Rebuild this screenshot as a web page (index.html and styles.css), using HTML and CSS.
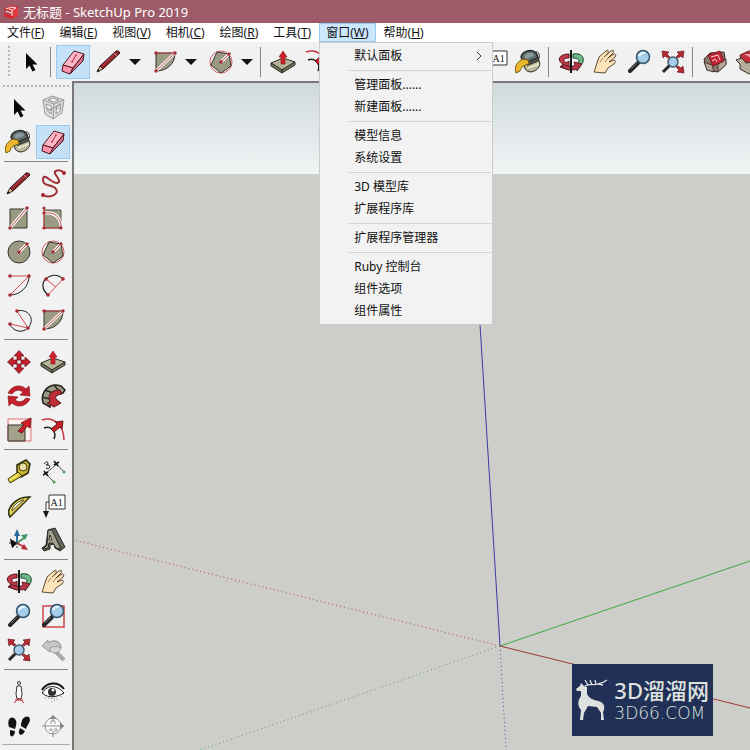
FILE: index.html
```html
<!DOCTYPE html>
<html lang="zh-CN">
<head>
<meta charset="utf-8">
<title>无标题 - SketchUp Pro 2019</title>
<link rel="stylesheet" href="styles.css">
</head>
<body>
<svg class="sprite" aria-hidden="true">
  <symbol id="select" viewBox="0 0 34 34"><path d="M12 8V24L15.5 20.5L18.5 26.5L21.5 25L18.5 19.5H23.5Z" fill="#080808"/></symbol>
  <symbol id="component" viewBox="0 0 34 34"><g fill="#dedede" stroke="#989898" stroke-linejoin="round"><path d="M7 9L16 5L28 9L26 22L17 28L9 23Z"/><path d="M7 9L18 13L28 9M18 13L17 28"/><path d="M10 13L15.500 15L15 23L11.500 20ZM20.500 15L25 12.500L24 20L20 23ZM12 9L17 7L23 9L18 11Z" fill="#f4f4f4"/><path d="M11 17L15 19M21 18L25 16M12 20L24 14" /></g></symbol>
  <symbol id="paint" viewBox="0 0 34 34"><path d="M11 11C14 5 22 5 25 9L28 19C27 26 17 30 13 24Z" fill="#b8b69b" stroke="#303129"/><path d="M9 12C10 6 20 3 24 8L26 13L12 19Z" fill="#5d6a68" stroke="#26292a" stroke-width="1.500"/><path d="M12 11C14 8 18 7 21 8L22 11L14 14Z" fill="#8a9b9d"/><path d="M15 20L27 15" stroke="#3e413a" stroke-width="2"/><path d="M16 23L27 19" stroke="#e4e1c8" stroke-width="2"/><path d="M22 8C27 4 29 12 26 15" fill="none" stroke="#333"/><path d="M11 14C5 17 2 21 4 28L8 26C9 22 12 20 17 19L16 15Z" fill="#edb72c" stroke="#785b16"/></symbol>
  <symbol id="eraser" viewBox="0 0 34 34"><g stroke="#4d1722" stroke-linejoin="round"><path d="M18 6L28 9L17 23L7 20Z" fill="#ffb5c4"/><path d="M7 20L17 23L14 29L6 26Z" fill="#ff94aa"/><path d="M28 9L27 16L14 29L17 23Z" fill="#d66f88"/></g><path d="M20 10L16 17M19 10H21M15 17H17" stroke="#a72d4a"/></symbol>
  <symbol id="pencil" viewBox="0 0 34 34"><path d="M8 21L24 6Q27 5 28 8L11 24Z" fill="#8f2228" stroke="#37181a"/><path d="M10 21L24 8" stroke="#c04a50"/><path d="M5 27L8 21L11 24Z" fill="#dec29b" stroke="#37281f"/><path d="M5 27L6 24L8 26Z" fill="#111"/><path d="M22 8L25 11" stroke="#bb9294"/></symbol>
  <symbol id="freehand" viewBox="0 0 34 34"><path d="M7 28C13 32 24 27 20 22C17 17 7 20 7 13C7 4 16 17 21 16C28 14 15 6 20 4Q24 2 28 6" fill="none" stroke="#9e3036" stroke-width="2"/><circle cx="7" cy="28" r="2" fill="#a82932"/><circle cx="28" cy="6" r="2" fill="#a82932"/></symbol>
  <symbol id="rect" viewBox="0 0 34 34"><path d="M8 8H25V27H8Z" fill="#9b9b83" stroke="#34342e"/><path d="M8 27L25 7" stroke="#fff" stroke-width="3"/><path d="M8 27L25 7" stroke="#bd3c43"/><circle cx="8" cy="27" r="1.700" fill="#a42b32"/><circle cx="25" cy="7" r="1.700" fill="#a42b32"/></symbol>
  <symbol id="rotrect" viewBox="0 0 34 34"><path d="M8 9H25V27H8Z" fill="#9b9b83" stroke="#54544b"/><path d="M8 12C19 11 24 16 25 25" fill="none" stroke="#fff" stroke-width="3"/><path d="M8 7V27H25V24C24 16 19 11 8 12" fill="none" stroke="#c6464c"/><g fill="#a42b32"><circle cx="8" cy="7" r="1.600"/><circle cx="8" cy="12" r="1.600"/><circle cx="8" cy="27" r="1.600"/><circle cx="25" cy="27" r="1.600"/></g></symbol>
  <symbol id="circle" viewBox="0 0 34 34"><circle cx="17" cy="17" r="11" fill="#9b9b83" stroke="#34342e"/><path d="M17 17L25 9" stroke="#fff" stroke-width="3"/><path d="M17 17L25 9" stroke="#bd3c43"/><circle cx="17" cy="17" r="1.700" fill="#a42b32"/><circle cx="25" cy="9" r="1.700" fill="#a42b32"/></symbol>
  <symbol id="polygon" viewBox="0 0 34 34"><circle cx="17" cy="17" r="11" fill="none" stroke="#ce5b60"/><path d="M13 7L25 9L27 21L17 28L7 20Z" fill="#9b9b83" stroke="#34342e"/><path d="M17 17L25 9" stroke="#fff" stroke-width="3"/><path d="M17 17L25 9" stroke="#bd3c43"/><circle cx="17" cy="17" r="1.700" fill="#a42b32"/><circle cx="25" cy="9" r="1.700" fill="#a42b32"/></symbol>
  <symbol id="arc" viewBox="0 0 34 34"><path d="M27 7C27 18 18 26 8 26" fill="none" stroke="#222"/><path d="M8 7H27L8 26" fill="none" stroke="#d04b51"/><g fill="#a42b32"><circle cx="8" cy="7" r="1.800"/><circle cx="27" cy="7" r="1.800"/><circle cx="8" cy="26" r="1.800"/></g></symbol>
  <symbol id="arc2" viewBox="0 0 34 34"><path d="M12 26C5 20 6 13 10 10C15 5 22 5 27 10" fill="none" stroke="#222" stroke-width="1.200"/><path d="M10 10L20 18M27 10L12 26" stroke="#d04b51"/><g fill="#a42b32"><circle cx="10" cy="10" r="1.800"/><circle cx="27" cy="10" r="1.800"/><circle cx="12" cy="26" r="1.800"/></g></symbol>
  <symbol id="arc3" viewBox="0 0 34 34"><path d="M15 8C26 5 34 16 26 25C20 31 10 28 8 21" fill="none" stroke="#222"/><path d="M15 8L26 25L8 21" fill="none" stroke="#d04b51"/><g fill="#a42b32"><circle cx="15" cy="8" r="1.800"/><circle cx="8" cy="21" r="1.800"/><circle cx="26" cy="25" r="1.800"/></g></symbol>
  <symbol id="pie" viewBox="0 0 34 34"><path d="M8 8H27C27 19 19 26 8 26Z" fill="#9b9b83" stroke="#34342e"/><path d="M8 26L27 8" stroke="#fff" stroke-width="3"/><path d="M8 8H27L8 26" fill="none" stroke="#c4444b"/><g fill="#a42b32"><circle cx="8" cy="8" r="1.700"/><circle cx="27" cy="8" r="1.700"/><circle cx="8" cy="26" r="1.700"/></g></symbol>
  <symbol id="move" viewBox="0 0 34 34"><path id="arm" d="M17 5.500L22 11H19V15H15V11H12Z" fill="#c3202c" stroke="#651219" stroke-width=".7"/><use href="#arm" transform="rotate(90 17 17)"/><use href="#arm" transform="rotate(180 17 17)"/><use href="#arm" transform="rotate(270 17 17)"/></symbol>
  <symbol id="push" viewBox="0 0 34 34"><g stroke="#2e2e25" stroke-linejoin="round"><path d="M5 18L17 13L29 17L16 25Z" fill="#b4b299"/><path d="M5 18V21L16 28V25ZM16 25L29 17V20L16 28Z" fill="#777860"/></g><path d="M17 6L21 12H19V19H15V12H13Z" fill="#cf202b" stroke="#9c1c24" stroke-width=".7"/></symbol>
  <symbol id="rotate" viewBox="0 0 34 34"><g fill="#c3202c" stroke="#8e151c" stroke-width=".7"><path id="turn" d="M6 14C10 6 19 5 24 10L27 7L28 17L18 16L21 13C17 10 13 11 10 15Z"/><use href="#turn" transform="rotate(180 17 17)"/></g></symbol>
  <symbol id="follow" viewBox="0 0 34 34"><path d="M25 7C13 3 4 13 7 24L14 28C13 20 19 14 27 14L29 11Z" fill="#9c9b87" stroke="#20201d" stroke-width="1.500"/><path d="M6 18L14 20M9 11L17 14M18 6L23 12" stroke="#292924" stroke-width="1.500"/><path d="M24 11C15 11 11 16 14 23L11 24L18 28L25 24L21 21C18 18 20 16 26 15Z" fill="#bd2d36" stroke="#58181a"/></symbol>
  <symbol id="scale" viewBox="0 0 34 34"><path d="M6 6H29V28H6Z" fill="#fbf1ef" stroke="#dd7077"/><path d="M6 12H23V28H6Z" fill="#a3a18a" stroke="#34332d"/><path d="M16 18L22 12L19 10L29 5L28 15L25 13L20 20Z" fill="#d11e29" stroke="#741a1e"/></symbol>
  <symbol id="offset" viewBox="0 0 34 34"><path d="M6 7C18 3 28 13 28 27" fill="none" stroke="#c8343e" stroke-width="1.500"/><path d="M8 15C15 12 21 19 18 26" fill="none" stroke="#27221f" stroke-width="1.500"/><path d="M15 16L21 11L19 9L27 8L26 16L24 14L18 19Z" fill="#c91f29" stroke="#621719"/></symbol>
  <symbol id="tape" viewBox="0 0 34 34"><path d="M15 10L24 5L28 9L26 18L19 22L15 18Z" fill="#c9b52f" stroke="#29270e" stroke-width="1.500"/><circle cx="21" cy="12" r="4" fill="#e8dfa0" stroke="#48441a"/><path d="M16 17L6 24L8 28L20 21Z" fill="#e0cb39" stroke="#403b0d"/><path d="M7 25L16 20" stroke="#fff79a"/></symbol>
  <symbol id="dimension" viewBox="0 0 34 34"><path d="M9 19L21 9M8 17L18 27M18 6L28 17" stroke="#50574f"/><path d="M7 20L12 17M18 10L23 7M8 16L12 21M18 6L22 11" stroke="#111" stroke-width="1.500"/><circle cx="18" cy="27" r="1.500" fill="#45a359"/><circle cx="28" cy="17" r="1.500" fill="#45a359"/><path d="M8 9Q11 5 12 8Q12 10 10 10Q14 9 14 12Q13 15 10 13" fill="none" stroke="#222"/></symbol>
  <symbol id="protractor" viewBox="0 0 34 34"><path d="M8 28C3 20 14 7 28 8Z" fill="#e2d358" stroke="#2f2d12" stroke-width="1.500"/><path d="M10 22C10 17 16 12 22 11Z" fill="#f0f0e8" stroke="#565023"/><path d="M8 28L28 8" stroke="#4b4617"/></symbol>
  <symbol id="label" viewBox="0 0 34 34"><path d="M13 6H29V20H13ZM13 13H10V23" fill="#fff" stroke="#333"/><path d="M7 22H13L10 29Z" fill="#161616"/><text x="14.500" y="17" font-size="10" font-family="Liberation Serif" fill="#111">A1</text></symbol>
  <symbol id="axes" viewBox="0 0 34 34"><path d="M15 20V10" stroke="#3070a0" stroke-width="2"/><path d="M12 13L15 6L18 13Z" fill="#286998"/><path d="M15 20L22 15" stroke="#4c9269" stroke-width="2"/><path d="M19 12L26 11L23 17Z" fill="#439765"/><path d="M15 20L22 24" stroke="#be3c42" stroke-width="2"/><path d="M22 21L26 27L19 26Z" fill="#b62c34"/><path d="M8 16L15 20L10 25M15 20V26M7 20H14" stroke="#333" stroke-dasharray="2 1"/></symbol>
  <symbol id="text3d" viewBox="0 0 34 34"><path d="M12 7L19 5L29 24L24 28L19 25L18 21L14 22L14 26L8 28L6 25L10 22Z" fill="#65645a" stroke="#272722" stroke-linejoin="round"/><path d="M12 7L16 7L25 26L20 25L17 20H13L12 25L7 26L11 22Z" fill="#a2a18e" stroke="#292924"/><path d="M14 12L16 17H13Z" fill="#eee" stroke="#34342d"/></symbol>
  <symbol id="orbit" viewBox="0 0 34 34"><path d="M19 9C32 7 32 19 23 23V19C27 16 25 13 19 13Z" fill="#6cb98a" stroke="#20462f"/><path d="M15 9C4 9 3 16 9 19L6 22L15 25V16L12 18C8 14 10 13 15 13Z" fill="#c23a49" stroke="#56171e"/><path d="M9 19C14 22 19 22 21 20L20 17L28 19L23 26V24C18 26 11 25 8 21Z" fill="#b53745" stroke="#5b2026"/><path d="M17 5V28" stroke="#151515" stroke-width="2"/></symbol>
  <symbol id="hand" viewBox="0 0 34 34"><path d="M6 27L11 12L18 6Q21 4 20 8L16 12L23 6Q27 4 25 8L20 13L26 9Q29 9 27 12L21 17L26 15Q29 16 26 19L20 23L17 28Z" fill="#ffe4bb" stroke="#5d4c36" stroke-linejoin="round"/><path d="M15 13L12 17M20 13L17 17" stroke="#9e805c"/></symbol>
  <symbol id="zoom" viewBox="0 0 34 34"><path d="M8 26L16 18" stroke="#252525" stroke-width="4" stroke-linecap="round"/><path d="M9 24L15 18" stroke="#777"/><circle cx="21" cy="12" r="6.500" fill="#a5cce9" stroke="#345269" stroke-width="1.500"/><path d="M17 11Q19 7 23 8" stroke="#e9f7ff" stroke-width="2" fill="none"/></symbol>
  <symbol id="window" viewBox="0 0 34 34"><path d="M7 7H28V28H7Z" fill="none" stroke="#cf454e" stroke-width="1.500"/><use href="#zoom"/></symbol>
  <symbol id="extents" viewBox="0 0 34 34"><g fill="#b72a34" stroke="#6b1c21" stroke-width=".7"><path d="M6 6L13 7L11 9L14 12L12 13L9 11L7 13Z"/><path d="M28 6L21 7L23 9L20 12L22 13L25 11L27 13Z"/><path d="M28 28L21 27L23 25L20 22L22 21L25 23L27 21Z"/></g><path d="M7 27L14 20" stroke="#272727" stroke-width="3"/><circle cx="17" cy="17" r="5" fill="#a5cce9" stroke="#45596a" stroke-width="1.500"/></symbol>
  <symbol id="previous" viewBox="0 0 34 34"><path d="M20 19L28 27" stroke="#aaa" stroke-width="4"/><circle cx="19" cy="14" r="6" fill="#d6d6d6" stroke="#9d9d9d"/><path d="M6 13L12 7V10C17 6 24 8 25 15C20 12 16 14 14 15V19Z" fill="#c8c8c8" stroke="#979797"/></symbol>
  <symbol id="person" viewBox="0 0 34 34"><circle cx="17" cy="8" r="1.500" fill="#fff" stroke="#333"/><path d="M15 11H19L20 19L19 24H15L14 19Z" fill="#fff" stroke="#333"/><path d="M12 28L17 23L22 28M13 25H21" stroke="#c62f35" fill="none"/></symbol>
  <symbol id="eye" viewBox="0 0 34 34"><path d="M6 18C12 9 21 10 28 18C21 22 13 24 6 18Z" fill="#fff" stroke="#171717"/><circle cx="16" cy="17" r="4" fill="#303030"/><circle cx="17" cy="15" r="1.500" fill="#fff"/><path d="M6 15C11 7 22 6 28 14" fill="none" stroke="#171717" stroke-width="2"/><path d="M9 23L21 24M15 27L23 23M25 21L26 24" stroke="#888" stroke-dasharray="1 2"/></symbol>
  <symbol id="feet" viewBox="0 0 34 34"><path d="M7 18C5 11 8 7 12 9C16 12 14 17 13 20ZM8 21L13 22C13 28 8 29 8 25ZM19 17C19 10 23 6 27 8C30 12 25 16 24 20ZM18 19L23 22C20 28 16 26 17 22Z" fill="#141414"/></symbol>
  <symbol id="section" viewBox="0 0 34 34"><circle cx="17" cy="17" r="8" fill="#fafafa" stroke="#999"/><path d="M6 17H28M17 7V12M17 22V28" stroke="#888"/><path d="M13 10L17 6L21 10M24 13L28 17L24 21Z" fill="#888"/><path d="M15 15V12H19V15M14 22V20H16V22M18 20H21V22H18" fill="none" stroke="#999"/></symbol>
  <symbol id="warehouse" viewBox="0 0 34 34"><path d="M6 14L12 8L26 7L28 19L20 27L9 25Z" fill="#8d7a6c" stroke="#3d2b27"/><path d="M6 17L14 20L16 27L9 25ZM28 14L20 19L20 27L28 20Z" fill="#b3a699" stroke="#47362f"/><path d="M10 10L22 6L26 16L15 21Z" fill="#c32635" stroke="#791a24"/><path d="M13 12L20 10L22 15M14 16L17 14L19 17" fill="none" stroke="#ffd4d4"/></symbol>
  <symbol id="share" viewBox="0 0 34 34"><path d="M8 10L17 6L28 8L25 20L16 22L9 17Z" fill="#c43039" stroke="#681e24"/><path d="M4 15L10 13L14 18L28 16L26 24L17 29L8 24V19Z" fill="#b5ac99" stroke="#37332e"/><path d="M12 9L22 9L19 13Z" fill="#e5a0a4"/></symbol>
</svg>
<div class="app">
  <header class="title-bar">
    <svg class="app-logo" viewBox="0 0 16 16" aria-hidden="true"><path d="M1 5L9 1L15 3V12L8 15L1 12V9L8 11V9L1 6Z" fill="#d82730"/><path d="M3 5L9 3L13 4L9 6L6 5M9 6V9M3 7L9 9V12" fill="none" stroke="#fff0ed"/><path d="M10 6L15 4V12L10 14Z" fill="#e6383f"/></svg>
    <h1>无标题 - SketchUp Pro 2019</h1>
  </header>
  <nav class="menu-bar" aria-label="主菜单">
    <button class="menu">文件(<u>F</u>)</button>
    <button class="menu">编辑(<u>E</u>)</button>
    <button class="menu">视图(<u>V</u>)</button>
    <button class="menu">相机(<u>C</u>)</button>
    <button class="menu">绘图(<u>R</u>)</button>
    <button class="menu">工具(<u>T</u>)</button>
    <div class="menu-host">
      <button class="menu open" aria-expanded="true">窗口(<u>W</u>)</button>
      <div class="dropdown">
        <button class="entry">默认面板<svg class="chevron" viewBox="0 0 6 10" aria-hidden="true"><path d="M1 1L5 5L1 9" fill="none" stroke="#333"/></svg></button>
        <hr>
        <button class="entry">管理面板......</button>
        <button class="entry">新建面板......</button>
        <hr>
        <button class="entry">模型信息</button>
        <button class="entry">系统设置</button>
        <hr>
        <button class="entry">3D 模型库</button>
        <button class="entry">扩展程序库</button>
        <hr>
        <button class="entry">扩展程序管理器</button>
        <hr>
        <button class="entry">Ruby 控制台</button>
        <button class="entry">组件选项</button>
        <button class="entry">组件属性</button>
      </div>
    </div>
    <button class="menu">帮助(<u>H</u>)</button>
  </nav>
  <div class="toolbar">
    <span class="grip"></span>
    <button class="tool" aria-label="选择"><svg><use href="#select"/></svg></button>
    <span class="rule"></span>
    <button class="tool active" aria-label="擦除"><svg><use href="#eraser"/></svg></button>
    <div class="drawing">
      <div class="split"><button class="tool" aria-label="直线"><svg><use href="#pencil"/></svg></button><button class="more" aria-label="更多线条"></button></div>
      <div class="split"><button class="tool" aria-label="圆弧"><svg><use href="#pie"/></svg></button><button class="more" aria-label="更多圆弧"></button></div>
      <div class="split"><button class="tool" aria-label="形状"><svg><use href="#polygon"/></svg></button><button class="more" aria-label="更多形状"></button></div>
    </div>
    <span class="rule"></span>
    <button class="tool" aria-label="推拉"><svg><use href="#push"/></svg></button>
    <button class="tool" aria-label="偏移"><svg><use href="#offset"/></svg></button>
    <button class="tool" aria-label="移动"><svg><use href="#move"/></svg></button>
    <button class="tool" aria-label="旋转"><svg><use href="#rotate"/></svg></button>
    <button class="tool" aria-label="缩放"><svg><use href="#scale"/></svg></button>
    <span class="rule"></span>
    <button class="tool" aria-label="卷尺"><svg><use href="#tape"/></svg></button>
    <button class="tool" aria-label="文字"><svg><use href="#label"/></svg></button>
    <button class="tool" aria-label="材质"><svg><use href="#paint"/></svg></button>
    <span class="rule"></span>
    <button class="tool" aria-label="环绕观察"><svg><use href="#orbit"/></svg></button>
    <button class="tool" aria-label="平移"><svg><use href="#hand"/></svg></button>
    <button class="tool" aria-label="视图缩放"><svg><use href="#zoom"/></svg></button>
    <button class="tool" aria-label="充满视窗"><svg><use href="#extents"/></svg></button>
    <span class="rule"></span>
    <button class="tool" aria-label="模型库"><svg><use href="#warehouse"/></svg></button>
    <button class="tool" aria-label="分享模型"><svg><use href="#share"/></svg></button>
  </div>
  <div class="workspace">
    <aside class="tool-set" aria-label="大工具集">
      <span class="grip"></span>
      <div class="group">
        <button class="tool" aria-label="选择"><svg><use href="#select"/></svg></button>
        <button class="tool" aria-label="制作组件"><svg><use href="#component"/></svg></button>
        <button class="tool" aria-label="材质"><svg><use href="#paint"/></svg></button>
        <button class="tool active" aria-label="擦除"><svg><use href="#eraser"/></svg></button>
      </div>
      <hr>
      <div class="group">
        <button class="tool" aria-label="直线"><svg><use href="#pencil"/></svg></button>
        <button class="tool" aria-label="手绘线"><svg><use href="#freehand"/></svg></button>
        <button class="tool" aria-label="矩形"><svg><use href="#rect"/></svg></button>
        <button class="tool" aria-label="旋转矩形"><svg><use href="#rotrect"/></svg></button>
        <button class="tool" aria-label="圆"><svg><use href="#circle"/></svg></button>
        <button class="tool" aria-label="多边形"><svg><use href="#polygon"/></svg></button>
        <button class="tool" aria-label="圆弧"><svg><use href="#arc"/></svg></button>
        <button class="tool" aria-label="两点圆弧"><svg><use href="#arc2"/></svg></button>
        <button class="tool" aria-label="三点圆弧"><svg><use href="#arc3"/></svg></button>
        <button class="tool" aria-label="扇形"><svg><use href="#pie"/></svg></button>
      </div>
      <hr>
      <div class="group">
        <button class="tool" aria-label="移动"><svg><use href="#move"/></svg></button>
        <button class="tool" aria-label="推拉"><svg><use href="#push"/></svg></button>
        <button class="tool" aria-label="旋转"><svg><use href="#rotate"/></svg></button>
        <button class="tool" aria-label="路径跟随"><svg><use href="#follow"/></svg></button>
        <button class="tool" aria-label="缩放"><svg><use href="#scale"/></svg></button>
        <button class="tool" aria-label="偏移"><svg><use href="#offset"/></svg></button>
      </div>
      <hr>
      <div class="group">
        <button class="tool" aria-label="卷尺"><svg><use href="#tape"/></svg></button>
        <button class="tool" aria-label="尺寸"><svg><use href="#dimension"/></svg></button>
        <button class="tool" aria-label="量角器"><svg><use href="#protractor"/></svg></button>
        <button class="tool" aria-label="文字"><svg><use href="#label"/></svg></button>
        <button class="tool" aria-label="轴"><svg><use href="#axes"/></svg></button>
        <button class="tool" aria-label="三维文字"><svg><use href="#text3d"/></svg></button>
      </div>
      <hr>
      <div class="group">
        <button class="tool" aria-label="环绕观察"><svg><use href="#orbit"/></svg></button>
        <button class="tool" aria-label="平移"><svg><use href="#hand"/></svg></button>
        <button class="tool" aria-label="视图缩放"><svg><use href="#zoom"/></svg></button>
        <button class="tool" aria-label="缩放窗口"><svg><use href="#window"/></svg></button>
        <button class="tool" aria-label="充满视窗"><svg><use href="#extents"/></svg></button>
        <button class="tool" aria-label="上一个"><svg><use href="#previous"/></svg></button>
      </div>
      <hr>
      <div class="group">
        <button class="tool" aria-label="定位相机"><svg><use href="#person"/></svg></button>
        <button class="tool" aria-label="绕轴旋转"><svg><use href="#eye"/></svg></button>
        <button class="tool" aria-label="漫游"><svg><use href="#feet"/></svg></button>
        <button class="tool" aria-label="剖切面"><svg><use href="#section"/></svg></button>
      </div>
    </aside>
    <main class="viewport">
      <svg class="scene" viewBox="0 0 676 667" preserveAspectRatio="xMinYMin slice" role="img" aria-label="坐标轴">
        <g fill="none">
          <path d="M391 0L426 563" stroke="#3b3ba8"/>
          <path d="M426 563L432 667" stroke="#5050a0" stroke-dasharray="1 3"/>
          <path d="M426 563L676 625" stroke="#9c3530"/>
          <path d="M426 563L0 457" stroke="#b54a40" stroke-dasharray="1 3"/>
          <path d="M426 563L676 478" stroke="#3fa63d"/>
          <path d="M426 563L126 667" stroke="#50a850" stroke-dasharray="1 3"/>
        </g>
      </svg>
      <div class="brand">
        <svg class="deer" viewBox="0 0 32 42" aria-hidden="true"><path d="M0 10L4 7L5 4L8 7L11 8L11 15C14 21 20 21 25 23C29 25 29 30 27 33L28 41H25L25 34L21 28L12 27L8 34L7 41H4L5 31C1 26 2 21 5 17L5 12L1 12Z" fill="#dfe1df"/><path d="M9 7C14 4 17 7 22 5Q27 4 31 1M12 6L9 1M16 6L14 1M20 5L19 1M22 5L27 6" fill="none" stroke="#dfe1df" stroke-width="1.300"/></svg>
        <div class="brand-text"><strong>3D溜溜网</strong><span>3D66.COM</span></div>
      </div>
    </main>
  </div>
</div>
</body>
</html>
```
FILE: styles.css
```css
* { box-sizing: border-box; }
body {
  margin: 0;
  overflow: hidden;
  color: #111;
  background: #f1f1f1;
  font: 12px/18px "Noto Sans", "Noto Sans CJK SC", sans-serif;
}
button {
  padding: 0;
  border: 0;
  background: none;
  color: inherit;
  font: inherit;
}
.sprite { position: absolute; width: 0; height: 0; }
.app { display: flex; flex-direction: column; height: 100vh; }
.title-bar {
  display: flex;
  flex: none;
  align-items: center;
  gap: 4px;
  height: 23px;
  padding-left: 3px;
  background: #9d5b69;
  color: #fff;
}
.title-bar h1 { margin: 0; font-size: 13px; font-weight: 400; }
.app-logo { width: 16px; height: 16px; }
.menu-bar { display: flex; flex: none; gap: 1px; height: 19px; background: #fff; }
.menu { height: 19px; padding: 0 7px; white-space: nowrap; }
.menu u { text-underline-offset: 1px; }
.menu-host { position: relative; }
.menu.open { background: #cce8ff; box-shadow: inset 0 0 0 1px #99cbee; }
.dropdown {
  position: absolute;
  z-index: 2;
  top: 19px;
  left: 0;
  width: 174px;
  padding: 2px 1px;
  border: 1px solid #ccc;
  background: #f2f2f2;
}
.dropdown hr {
  height: 1px;
  margin: 3px 0 3px 28px;
  border: 0;
  background: #d2d2d2;
}
.entry {
  display: flex;
  align-items: center;
  justify-content: space-between;
  width: 100%;
  height: 22px;
  padding: 0 9px 0 33px;
}
.chevron { width: 6px; height: 10px; }
.toolbar {
  display: flex;
  flex: none;
  align-items: center;
  height: 39px;
  padding-left: 8px;
  overflow: hidden;
}
.toolbar .grip {
  flex: none;
  width: 2px;
  height: 32px;
  margin-right: 4px;
  background: repeating-linear-gradient(#b8b8b8 0 2px, transparent 2px 4px);
}
.rule { flex: none; width: 1px; height: 30px; margin: 0 5px 0 2px; background: #888; }
.drawing { display: flex; flex: none; gap: 4px; padding: 0 2px; }
.tool { flex: none; width: 34px; height: 34px; }
.tool svg { display: block; width: 34px; height: 34px; }
.tool.active { background: #c5e1f7; box-shadow: inset 0 0 0 1px #9acaef; }
.split { display: flex; }
.more { display: grid; place-items: center; width: 18px; }
.more::before {
  content: "";
  border: 6px solid transparent;
  border-top-color: #111;
  border-bottom: 0;
}
.workspace { display: flex; flex: 1; min-height: 0; }
.tool-set {
  display: flex;
  flex: none;
  flex-direction: column;
  width: 72px;
  padding: 4px 2px 0;
}
.tool-set .grip {
  flex: none;
  height: 2px;
  margin: 0 1px 4px;
  background: repeating-linear-gradient(90deg, #b8b8b8 0 2px, transparent 2px 4px);
}
.tool-set hr {
  flex: none;
  width: 64px;
  height: 1px;
  margin: 2px 2px 5px;
  border: 0;
  background: #858585;
}
.group { display: grid; grid-template-columns: 34px 34px; flex: none; }
.group:last-child { padding-bottom: 1px; border-bottom: 1px solid #aaa; }
.viewport {
  position: relative;
  flex: 1;
  min-width: 0;
  border: solid #777;
  border-width: 2px 0 0 2px;
  background: linear-gradient(#d0d9dc, #f0f4f5 91px, #cdcec9 91px);
}
.scene { display: block; width: 100%; height: 100%; }
.brand {
  position: absolute;
  right: 37px;
  bottom: 14px;
  display: flex;
  align-items: center;
  gap: 6px;
  height: 72px;
  padding: 0 4px;
  background: #203057;
  color: #dfe1df;
}
.deer { width: 32px; height: 42px; }
.brand-text { display: flex; flex-direction: column; }
.brand-text strong { font-size: 22px; font-weight: 500; line-height: 26px; }
.brand-text span { font: 200 17px/20px "DejaVu Sans", sans-serif; }
```
